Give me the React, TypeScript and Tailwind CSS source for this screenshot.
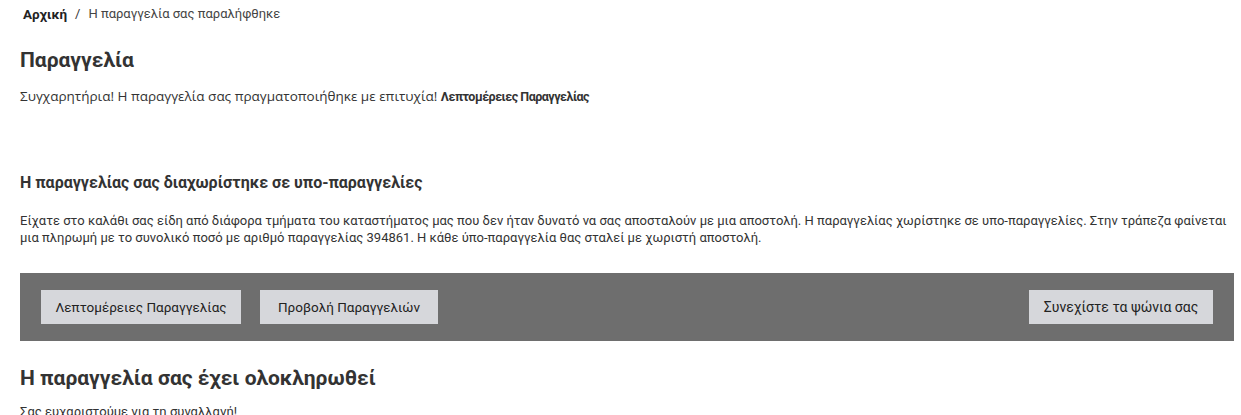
export default function App() {
  return (
    <div className="min-h-screen bg-white pl-5 pr-[7px] text-[#333] font-['Roboto',sans-serif]">
      <nav className="flex items-center pl-[3px] pt-[6px] text-[13px] leading-4">
        <span className="text-[13.5px] font-bold text-[#222]">Αρχική</span>
        <span className="mx-2">/</span>
        <span className="text-[#444]">Η παραγγελία σας παραλήφθηκε</span>
      </nav>

      <h1 className="mt-[26px] text-[21px] font-bold leading-6 text-[#333]">Παραγγελία</h1>
      <p className="mt-[14px] font-['Open_Sans',sans-serif] text-[13.5px] leading-5 text-[#333]">
        Συγχαρητήρια! Η παραγγελία σας πραγματοποιήθηκε με επιτυχία!{' '}
        <b className="font-['Roboto',sans-serif] text-[12.5px] tracking-[-0.5px]">Λεπτομέρειες Παραγγελίας</b>
      </p>

      <h3 className="mt-[66px] text-[16px] font-bold leading-5 text-[#333]">
        Η παραγγελίας σας διαχωρίστηκε σε υπο-παραγγελίες
      </h3>
      <p className="mt-[19px] text-[13px] leading-[17px] text-[#333]">
        Είχατε στο καλάθι σας είδη από διάφορα τμήματα του καταστήματος μας που δεν ήταν δυνατό να σας
        αποσταλούν με μια αποστολή. Η παραγγελίας χωρίστηκε σε υπο-παραγγελίες. Στην τράπεζα φαίνεται
        <br />
        μια πληρωμή με το συνολικό ποσό με αριθμό παραγγελίας 394861. Η κάθε ύπο-παραγγελία θας σταλεί με
        χωριστή αποστολή.
      </p>

      <div className="mt-[27px] flex h-[68px] items-center gap-[19px] bg-[#6e6e6e] px-[21px]">
        <button className="h-[34px] w-[200px] bg-[#d6d7db] text-[13.5px] text-[#222]">
          Λεπτομέρειες Παραγγελίας
        </button>
        <button className="h-[34px] w-[178px] bg-[#d6d7db] text-[13.5px] text-[#222]">
          Προβολή Παραγγελιών
        </button>
        <button className="ml-auto h-[34px] w-[184px] bg-[#d6d7db] text-[14px] text-[#222]">
          Συνεχίστε τα ψώνια σας
        </button>
      </div>

      <h2 className="mt-[25px] text-[21px] font-bold leading-6 text-[#333]">
        Η παραγγελία σας έχει ολοκληρωθεί
      </h2>
      <p className="mt-[14px] text-[13px] leading-4 text-[#333]">Σας ευχαριστούμε για τη συναλλαγή!</p>
    </div>
  )
}
